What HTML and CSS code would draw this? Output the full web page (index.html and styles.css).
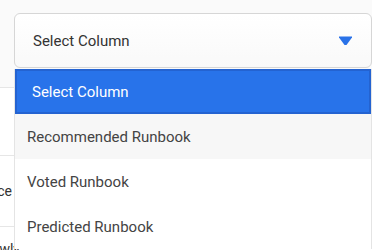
FILE: index.html
```html
<!DOCTYPE html>
<html lang="en">
<head>
    <meta charset="UTF-8">
    <meta name="viewport" content="width=device-width, initial-scale=1.0">
    <title>Select Column</title>
    <link rel="stylesheet" href="styles.css">
</head>
<body>
    <div class="picker">
        <div class="select-box">
            <span class="select-label">Select Column</span>
            <svg class="select-arrow" width="13" height="9" viewBox="0 0 13 9">
                <polygon points="0,0.5 13,0.5 13,1.5 7.5,9 5.5,9 0,1.5" fill="#2a72e8"/>
            </svg>
        </div>
        <ul class="options">
            <li class="option selected">Select Column</li>
            <li class="option hovered">Recommended Runbook</li>
            <li class="option">Voted Runbook</li>
            <li class="option">Predicted Runbook</li>
        </ul>
    </div>

    <div class="table">
        <div class="row row-head"><div class="cell"></div></div>
        <div class="row"><div class="cell"></div></div>
        <div class="row"><div class="cell">Reference</div></div>
        <div class="row row-last"><div class="cell">Newly</div></div>
    </div>
</body>
</html>
```

FILE: styles.css
```css
html {
    overflow: hidden;
}
body {
    margin: 0;
    width: 372px;
    height: 250px;
    overflow: hidden;
    font-family: Roboto, "Liberation Sans", sans-serif;
    background-color: #fafafa;
}
.picker {
    position: relative;
    padding: 13px 0 0 14px;
    z-index: 2;
}
.select-box {
    display: flex;
    align-items: center;
    justify-content: space-between;
    box-sizing: border-box;
    width: 358px;
    height: 55px;
    padding: 0 19px 0 18px;
    border: 1px solid #d6d6d6;
    border-radius: 6px;
    background: linear-gradient(#ffffff, #f9f9f9);
    color: #333;
    font-size: 15px;
}
.select-arrow {
    display: block;
}
.options {
    position: absolute;
    top: 69px;
    left: 14px;
    width: 356px;
    margin: 0;
    padding: 0;
    list-style: none;
    border-left: 1px solid #e4e4e4;
    border-right: 1px solid #e4e4e4;
    background: #fff;
}
.option {
    box-sizing: border-box;
    height: 45px;
    display: flex;
    align-items: center;
    padding-left: 12px;
    font-size: 15px;
    color: #444;
}
.option.selected {
    padding-left: 17px;
    background-color: #2873ea;
    box-shadow: inset 0 0 0 2px #2463d1;
    color: #fff;
}
.option.hovered {
    background-color: #f7f7f7;
}
.table {
    position: relative;
    z-index: 1;
}
.row {
    height: 70px;
    border-bottom: 1px solid #e6e6e6;
    background: #fff;
}
.row-head {
    height: 19px;
    background: #fafafa;
}
.row:nth-child(2) {
    height: 67px;
}
.cell {
    width: 12px;
    height: 100%;
    display: flex;
    align-items: center;
    justify-content: flex-end;
    overflow: hidden;
    white-space: nowrap;
    font-size: 14px;
    color: #333;
}
.row-last .cell {
    width: 20px;
    height: 30px;
    align-items: flex-end;
}
```
